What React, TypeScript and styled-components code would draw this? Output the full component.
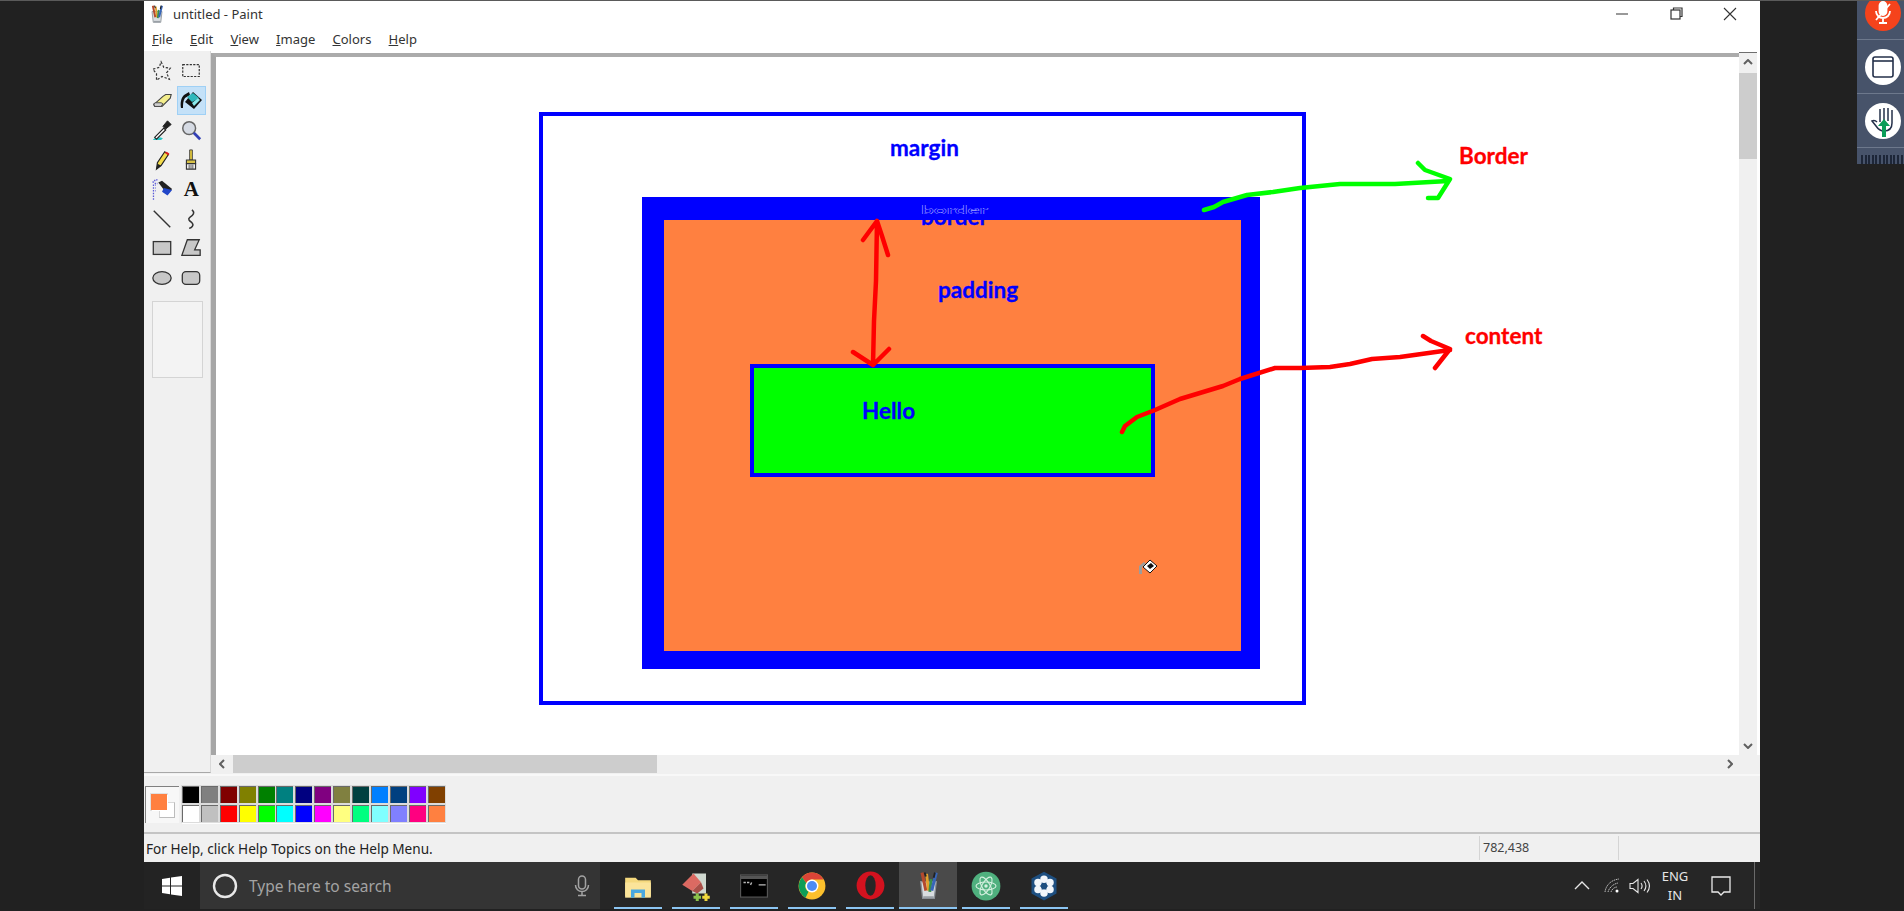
import React from "react";
import styled, { createGlobalStyle } from "styled-components";

const GlobalStyle = createGlobalStyle`
  html, body {
    margin: 0;
    padding: 0;
    background: #212121;
    overflow: hidden;
  }
  * {
    box-sizing: border-box;
  }
`;

const Screen = styled.div`
  position: relative;
  width: 1904px;
  height: 911px;
  padding: 0 144px;
  background: #212121;
  border-top: 1px solid #5a5a5a;
  display: flex;
  flex-direction: column;
  overflow: hidden;
  font-family: "Noto Sans", "Open Sans", sans-serif;
`;

const PaintWindow = styled.div`
  flex: none;
  height: 861px;
  display: flex;
  flex-direction: column;
  background: #f0f0f0;
  color: #1a1a1a;
`;

const TitleBar = styled.div`
  height: 25px;
  flex: none;
  background: #fff;
  display: flex;
  align-items: center;
  padding: 0 6px 0 3px;
  gap: 6px;
  font-size: 13px;
`;

const TitleText = styled.span`
  flex: 1;
  color: #333;
`;

const WindowButton = styled.div`
  width: 48px;
  height: 25px;
  display: flex;
  align-items: center;
  justify-content: center;
`;

const MenuBar = styled.div`
  height: 25px;
  flex: none;
  background: #fff;
  display: flex;
  align-items: center;
  gap: 17.2px;
  padding-left: 8px;
  font-size: 13px;
  color: #333;
`;

const Workspace = styled.div`
  height: 723px;
  flex: none;
  display: flex;
`;

const ToolPanel = styled.div`
  width: 67px;
  height: 722px;
  flex: none;
  padding: 5px 0 0 3.5px;
  border-bottom: 1px solid #a8a8a8;
  border-right: 1px solid #d8d8d8;
  background: #f0f0f0;
`;

const ToolGrid = styled.div`
  display: grid;
  grid-template-columns: repeat(2, 29.3px);
  grid-auto-rows: 29.6px;
`;

const ToolButton = styled.div<{ $active?: boolean }>`
  display: flex;
  align-items: center;
  justify-content: center;
  border: 1px solid ${(p) => (p.$active ? "#9fd0f5" : "transparent")};
  background: ${(p) => (p.$active ? "#c4e1f8" : "transparent")};
`;

const LetterTool = styled.span`
  font-family: "Liberation Serif", serif;
  font-weight: 700;
  font-size: 21px;
  line-height: 1;
  color: #111;
`;

const ToolOptions = styled.div`
  width: 51px;
  height: 77px;
  margin: 8px 0 0 4.5px;
  border: 1px solid #d4d4d4;
  background: #f3f3f3;
`;

const CanvasColumn = styled.div`
  flex: 1;
  min-width: 0;
  display: flex;
  flex-direction: column;
`;

const CanvasRow = styled.div`
  height: 704px;
  flex: none;
  display: flex;
  padding-right: 3px;
  background: #fff;
`;

const Viewport = styled.div`
  flex: 1;
  position: relative;
  margin-top: 2px;
  background: #fff;
  border-top: 4px solid #ababab;
  border-left: 5px solid #a6a6a6;
  overflow: hidden;
`;

const VerticalScroll = styled.div`
  width: 18px;
  flex: none;
  margin-top: 1px;
  display: flex;
  flex-direction: column;
  background: #f0f0f0;
  border-top: 1px solid #6e6e6e;
`;

const ArrowCell = styled.div`
  width: 18px;
  height: 18px;
  flex: none;
  display: flex;
  align-items: center;
  justify-content: center;
`;

const VerticalThumb = styled.div`
  height: 86px;
  flex: none;
  margin-top: 2px;
  background: #cdcdcd;
`;

const Filler = styled.div`
  flex: 1;
`;

const HorizontalScroll = styled.div`
  height: 18px;
  flex: none;
  display: flex;
  background: #f0f0f0;
  margin: 0 3px 0 2px;
`;

const HorizontalThumb = styled.div`
  width: 424px;
  flex: none;
  margin-left: 2px;
  background: #cdcdcd;
`;

const PaletteBar = styled.div`
  height: 60px;
  flex: none;
  display: flex;
  gap: 3px;
  padding: 12px 0 0 1px;
  background: #f0f0f0;
  border-bottom: 2px solid #c4c4c4;
  box-shadow: inset 0 2px 0 #f8f8f8;
`;

const ColorSelector = styled.div`
  position: relative;
  width: 34px;
  height: 37px;
  background: #f7f7f7;
  border-top: 1px solid #808080;
  border-left: 1px solid #808080;
`;

const BackColor = styled.div`
  position: absolute;
  left: 13px;
  top: 15px;
  width: 16px;
  height: 16px;
  background: #fff;
  border: 1px solid #bcbcbc;
  border-top-color: #d8d8d8;
  border-left-color: #d8d8d8;
`;

const ForeColor = styled.div<{ $color: string }>`
  position: absolute;
  left: 5px;
  top: 7px;
  width: 16px;
  height: 16px;
  background: ${(p) => p.$color};
  box-shadow: 1px 1px 0 #fff, 0 0 0 1px #e0e0e0;
`;

const SwatchGrid = styled.div`
  display: grid;
  grid-template-columns: repeat(14, 18.9px);
  grid-auto-rows: 18.9px;
  align-self: flex-start;
  background: #fdfdfd;
`;

const Swatch = styled.div<{ $color: string }>`
  width: 17px;
  height: 17px;
  background: ${(p) => p.$color};
  border-top: 1px solid #6a6a6a;
  border-left: 1px solid #6a6a6a;
  outline: 1px solid #dcdcdc;
`;

const StatusBar = styled.div`
  flex: 1;
  display: flex;
  align-items: center;
  font-size: 13.6px;
  color: #222;
  background: #f0f0f0;
`;

const StatusHelp = styled.div`
  width: 1335px;
  padding-left: 2px;
`;

const StatusCell = styled.div<{ $width: number }>`
  width: ${(p) => p.$width}px;
  height: 24px;
  line-height: 24px;
  padding-left: 3px;
  border-left: 1px solid #d4d4d4;
  font-size: 12.5px;
  color: #444;
`;

/* the painted picture */
const OuterBox = styled.div`
  position: absolute;
  left: 323px;
  top: 55px;
  width: 767px;
  height: 593px;
  border: 4px solid #0000ff;
  background: #fff;
`;

const BorderBox = styled.div`
  width: 618px;
  height: 472px;
  margin: 81px 0 0 99px;
  border-style: solid;
  border-color: #0000ff;
  border-width: 23px 19px 18px 22px;
  background: #ff8040;
`;

const ContentBox = styled.div`
  width: 405px;
  height: 113px;
  margin: 144px 0 0 86px;
  border: 4.5px solid #0000ff;
  background: #00ff00;
`;

const PaintLabel = styled.span<{ $x: number; $y: number; $color?: string }>`
  position: absolute;
  left: ${(p) => p.$x - 216}px;
  top: ${(p) => p.$y - 1 - 57}px;
  font-family: "Lato", "Open Sans", sans-serif;
  font-weight: 700;
  font-size: 22.5px;
  line-height: 26px;
  color: ${(p) => p.$color || "#0000ff"};
  -webkit-text-stroke: 0.3px currentColor;
`;

/* the word was typed twice in the picture: a squashed pale copy sits in the blue band */
const SmearedLabel = styled(PaintLabel)`
  &::before {
    content: "border";
    position: absolute;
    left: 0;
    top: -7px;
    color: transparent;
    -webkit-text-stroke: 0.4px #e8ecff;
    transform: scaleY(0.5);
  }
`;

const Strokes = styled.svg`
  position: absolute;
  left: -216px;
  top: -57px;
  width: 1904px;
  height: 911px;
  pointer-events: none;
`;

const PaintCursor = styled.svg`
  position: absolute;
  left: ${1138 - 216}px;
  top: ${558 - 57}px;
`;

/* taskbar */
const Taskbar = styled.div`
  height: 47px;
  flex: none;
  display: flex;
  background: #262626;
  color: #fff;
`;

const StartButton = styled.div`
  width: 56px;
  flex: none;
  display: flex;
  align-items: center;
  justify-content: center;
  background: #232323;
`;

const SearchBox = styled.div`
  width: 400px;
  flex: none;
  display: flex;
  align-items: center;
  padding: 0 10px 0 12px;
  gap: 11px;
  background: #343434;
  color: #a3a3a3;
  font-size: 15.5px;
`;

const SearchText = styled.span`
  flex: 1;
`;

const Pins = styled.div`
  display: flex;
  padding-left: 9px;
`;

const Pin = styled.div<{ $active?: boolean }>`
  position: relative;
  width: 58px;
  height: 47px;
  display: flex;
  align-items: center;
  justify-content: center;
  background: ${(p) => (p.$active ? "#4a4a4a" : "transparent")};

  &::after {
    content: "";
    position: absolute;
    left: ${(p) => (p.$active ? 0 : "5px")};
    right: ${(p) => (p.$active ? 0 : "5px")};
    bottom: 0;
    height: 2px;
    background: #8cc5f2;
  }
`;

const Tray = styled.div`
  flex: 1;
  display: flex;
  align-items: center;
  justify-content: flex-end;
  padding-right: 5px;
`;

const TrayIcon = styled.div<{ $width: number }>`
  width: ${(p) => p.$width}px;
  display: flex;
  justify-content: center;
`;

const Language = styled.div`
  width: 34px;
  margin-left: 7px;
  text-align: center;
  font-size: 13px;
  line-height: 19px;
  color: #e6e6e6;
`;

const ShowDesktop = styled.div`
  width: 1px;
  height: 47px;
  margin-left: 4px;
  background: #6a6a6a;
`;

/* meeting controls, floating over the screen share */
const MeetingRail = styled.div`
  position: absolute;
  right: 0;
  top: 0;
  width: 47px;
  height: 163px;
  background: #47536a;
  display: flex;
  flex-direction: column;
  align-items: center;
`;

const RailSlot = styled.div<{ $height: number; $cut?: boolean }>`
  width: 100%;
  height: ${(p) => p.$height}px;
  flex: none;
  display: flex;
  align-items: ${(p) => (p.$cut ? "flex-end" : "center")};
  justify-content: center;
  padding-bottom: ${(p) => (p.$cut ? "8px" : 0)};
  padding-left: 5px;
  border-bottom: 1px solid #6d788c;
  overflow: hidden;
`;

const RailCircle = styled.div<{ $color: string }>`
  width: 36px;
  height: 36px;
  flex: none;
  border-radius: 50%;
  display: flex;
  align-items: center;
  justify-content: center;
  background: ${(p) => p.$color};
`;

const Grille = styled.div`
  width: 42px;
  height: 15px;
  margin: 7px 0 0 3px;
  background: repeating-linear-gradient(90deg, #1d2638 0 2px, #47536a 2px 3.6px);
`;

const swatches = [
  "#000000", "#808080", "#800000", "#808000", "#008000", "#008080", "#000080",
  "#800080", "#808040", "#004040", "#0080ff", "#004080", "#8000ff", "#804000",
  "#ffffff", "#c0c0c0", "#ff0000", "#ffff00", "#00ff00", "#00ffff", "#0000ff",
  "#ff00ff", "#ffff80", "#00ff80", "#80ffff", "#8080ff", "#ff0080", "#ff8040",
];

const Icon: React.FC<{ size?: number; children: React.ReactNode }> = ({ size = 22, children }) => (
  <svg width={size} height={size} viewBox="0 0 24 24" fill="none">
    {children}
  </svg>
);

const PaintCup: React.FC<{ size: number }> = ({ size }) => (
  <Icon size={size}>
    <path d="M6 9h12l-1.5 13h-9z" fill="#d8dde0" stroke="#8a9096" strokeWidth="1" />
    <path d="M7 2l3 14" stroke="#b5492c" strokeWidth="2.4" />
    <path d="M10.5 3l1.5 13" stroke="#e2a12c" strokeWidth="2.2" />
    <path d="M14 7l-1 10" stroke="#3a8f4a" strokeWidth="2.2" />
    <path d="M18 2l-3.5 14" stroke="#3866b8" strokeWidth="2.4" />
    <path d="M9 2l1 3M17 2l-1 4" stroke="#222" strokeWidth="1.4" />
    <path d="M8 21h8" stroke="#9aa0a6" strokeWidth="1.4" />
  </Icon>
);

const tools: { name: string; icon: React.ReactNode; active?: boolean }[] = [
  {
    name: "free select",
    icon: (
      <Icon>
        <path d="M11 2l3 6 7 1-4 5 3 7-8-3-6 4 0-7-4-5 7-2z" stroke="#333" strokeWidth="1.3" strokeDasharray="2.6 1.8" />
      </Icon>
    ),
  },
  {
    name: "select",
    icon: (
      <Icon>
        <rect x="3" y="5" width="18" height="13" stroke="#333" strokeWidth="1.3" strokeDasharray="2.4 1.4" />
      </Icon>
    ),
  },
  {
    name: "eraser",
    icon: (
      <Icon>
        <path d="M3 17l10-9 3-2h6l-1 4-9 9H4z" fill="#f4ee8c" stroke="#444" strokeWidth="1.2" />
        <path d="M3 16l2-1h6l2 1-2 3H4z" fill="#d0d0d0" stroke="#444" strokeWidth="1" />
      </Icon>
    ),
  },
  {
    name: "fill",
    active: true,
    icon: (
      <Icon size={24}>
        <path d="M2 20c-1-5 0-10 3-13l5-3 1 3-5 3c-2 3-2 6-2 10z" fill="#111" />
        <path d="M6 14l8-10 9 8-8 9z" fill="#111" />
        <path d="M8 9l6-4 6 5-7 4z" fill="#30b8bc" />
        <path d="M13 15l6-5 2 2-6 6z" fill="#8ae8ea" />
      </Icon>
    ),
  },
  {
    name: "pick color",
    icon: (
      <Icon>
        <path d="M2 23c2-3 7-4 11-2l-2 2z" fill="#2cc6c6" />
        <path d="M4 20l10-10 2 2L6 22z" fill="#fff" stroke="#222" strokeWidth="1.3" />
        <path d="M13 8l5-6 4 4-6 5z" fill="#222" stroke="#222" />
      </Icon>
    ),
  },
  {
    name: "magnifier",
    icon: (
      <Icon>
        <circle cx="10" cy="10" r="7" fill="#d6dbe4" stroke="#666" strokeWidth="1.6" />
        <path d="M15 15l7 7" stroke="#3340b5" strokeWidth="3" />
      </Icon>
    ),
  },
  {
    name: "pencil",
    icon: (
      <Icon>
        <path d="M6 22l1-7 8-12 4 3-8 12z" fill="#f4dc4c" stroke="#222" strokeWidth="1.3" />
        <path d="M6 22l1-6 4 2z" fill="#222" />
        <path d="M15 4l4 3 1-2-3-2z" fill="#d22" />
      </Icon>
    ),
  },
  {
    name: "brush",
    icon: (
      <Icon>
        <path d="M10.5 1h3v11h-3z" fill="#e2c83c" stroke="#444" strokeWidth="1" />
        <path d="M7 12h10v4H7z" fill="#d8c248" stroke="#333" strokeWidth="1.2" />
        <path d="M7 16h10v6H7z" fill="#eee" stroke="#333" strokeWidth="1.2" />
        <path d="M10 17v5M12 17v5M14 17v5" stroke="#555" />
      </Icon>
    ),
  },
  {
    name: "airbrush",
    icon: (
      <Icon>
        <path d="M2 5c1-2 3-3 5-3M2 8h3M2 11h3M2 14h3M2 17h2M2 20h2M2 23h2M4 6h3" stroke="#5a5ad8" strokeWidth="1.6" strokeDasharray="1.4 1" />
        <path d="M8 5l4-2 11 9-5 6z" fill="#222" />
        <path d="M14 11l9 2-5 6-6-4z" fill="#2146c8" />
      </Icon>
    ),
  },
  { name: "text", icon: <LetterTool>A</LetterTool> },
  {
    name: "line",
    icon: (
      <Icon>
        <path d="M3 3l18 18" stroke="#333" strokeWidth="1.6" />
      </Icon>
    ),
  },
  {
    name: "curve",
    icon: (
      <Icon>
        <path d="M13 2c4 3 1 6-2 8-3 2-1 4 2 6 3 3-1 6-3 6" stroke="#333" strokeWidth="1.6" />
      </Icon>
    ),
  },
  {
    name: "rectangle",
    icon: (
      <Icon>
        <rect x="2.5" y="5" width="19" height="14" fill="#c8c8c8" stroke="#333" strokeWidth="1.4" />
      </Icon>
    ),
  },
  {
    name: "polygon",
    icon: (
      <Icon>
        <path d="M8 3h13l-5 11h6v6H2z" fill="#c8c8c8" stroke="#333" strokeWidth="1.4" />
      </Icon>
    ),
  },
  {
    name: "ellipse",
    icon: (
      <Icon>
        <ellipse cx="12" cy="12" rx="10" ry="7" fill="#c8c8c8" stroke="#333" strokeWidth="1.4" />
      </Icon>
    ),
  },
  {
    name: "rounded rectangle",
    icon: (
      <Icon>
        <rect x="2.5" y="5" width="19" height="14" rx="4" fill="#c8c8c8" stroke="#333" strokeWidth="1.4" />
      </Icon>
    ),
  },
];

const pins: { name: string; icon: React.ReactNode; active?: boolean }[] = [
  {
    name: "explorer",
    icon: (
      <Icon size={28}>
        <path d="M1 5h9l2 2h11v14H1z" fill="#f5d97e" />
        <path d="M1 9h22v13H1z" fill="#fbe49a" />
        <path d="M6 22v-7h12v7h-3v-4H9v4z" fill="#4aa8e0" />
      </Icon>
    ),
  },
  {
    name: "notepad",
    icon: (
      <Icon size={30}>
        <path d="M9 2h11v16H9z" fill="#cfd8cf" />
        <path d="M1 11L10 2l6 7-7 7z" fill="#dc6a62" />
        <path d="M9 16l7-7 2 5-5 4z" fill="#a94f48" />
        <path d="M10 21h6M13 18v6" stroke="#8bc34a" strokeWidth="2.4" />
        <path d="M17 21h6M20 18v6" stroke="#f0d83c" strokeWidth="2.4" />
      </Icon>
    ),
  },
  {
    name: "terminal",
    icon: (
      <Icon size={28}>
        <rect x="0.5" y="2.5" width="23" height="19" fill="#000" stroke="#555" />
        <path d="M0.5 3h23v3h-23z" fill="#555" />
        <path d="M3 9h2M6 9h2M10 9l-1 2M16 11h6" stroke="#bbb" strokeWidth="1.2" />
      </Icon>
    ),
  },
  {
    name: "chrome",
    icon: (
      <Icon size={28}>
        <circle cx="12" cy="12" r="11.5" fill="#fbc02d" />
        <path d="M12 .5A11.5 11.5 0 0 1 22 6.5H12a5.5 5.5 0 0 0-5 3L3.5 4.500A11.500 11.500 0 0 1 12 .5z" fill="#db4437" />
        <path d="M3.500 4.500L7 9.500a5.500 5.500 0 0 0 2 7.500l-2.500 5A11.500 11.500 0 0 1 3.500 4.500z" fill="#0f9d58" />
        <circle cx="12" cy="12" r="5.500" fill="#fff" />
        <circle cx="12" cy="12" r="4.300" fill="#4c8bf5" />
      </Icon>
    ),
  },
  {
    name: "opera",
    icon: (
      <Icon size={29}>
        <circle cx="12" cy="12" r="11.500" fill="#d3121f" />
        <ellipse cx="12" cy="12" rx="4.300" ry="8.500" fill="#262626" />
      </Icon>
    ),
  },
  { name: "paint", active: true, icon: <PaintCup size={31} /> },
  {
    name: "atom",
    icon: (
      <Icon size={30}>
        <circle cx="12" cy="12" r="11.500" fill="#4fb07e" />
        <g stroke="#d5f0e0" strokeWidth="0.9" fill="none">
          <ellipse cx="12" cy="12" rx="8" ry="3.200" />
          <ellipse cx="12" cy="12" rx="8" ry="3.200" transform="rotate(60 12 12)" />
          <ellipse cx="12" cy="12" rx="8" ry="3.200" transform="rotate(120 12 12)" />
        </g>
        <circle cx="12" cy="12" r="1.400" fill="#d5f0e0" />
      </Icon>
    ),
  },
  {
    name: "snow",
    icon: (
      <Icon size={30}>
        <path d="M12 .5l10 5.500v12l-10 5.500-10-5.500V6z" fill="#1e4f80" />
        <g fill="#f2f6fa">
          <circle cx="12" cy="6.500" r="3" />
          <circle cx="12" cy="17.500" r="3" />
          <circle cx="7.200" cy="9.200" r="3" />
          <circle cx="16.800" cy="9.200" r="3" />
          <circle cx="7.200" cy="14.800" r="3" />
          <circle cx="16.800" cy="14.800" r="3" />
        </g>
        <circle cx="12" cy="12" r="2.500" fill="#1e4f80" />
      </Icon>
    ),
  },
];

const App: React.FC = () => (
  <>
    <GlobalStyle />
    <Screen>
      <PaintWindow>
        <TitleBar>
          <PaintCup size={20} />
          <TitleText>untitled - Paint</TitleText>
          <WindowButton>
            <svg width="12" height="2"><path d="M0 1h12" stroke="#555" strokeWidth="1.2" /></svg>
          </WindowButton>
          <WindowButton>
            <svg width="13" height="13" fill="none" stroke="#333" strokeWidth="1.2">
              <rect x="1" y="3" width="9" height="9" />
              <path d="M3.500 3V1h8.500v8.500H10" />
            </svg>
          </WindowButton>
          <WindowButton>
            <svg width="14" height="14" stroke="#333" strokeWidth="1.1"><path d="M1 1l12 12M13 1L1 13" /></svg>
          </WindowButton>
        </TitleBar>
        <MenuBar>
          <span><u>F</u>ile</span>
          <span><u>E</u>dit</span>
          <span><u>V</u>iew</span>
          <span><u>I</u>mage</span>
          <span><u>C</u>olors</span>
          <span><u>H</u>elp</span>
        </MenuBar>
        <Workspace>
          <ToolPanel>
            <ToolGrid>
              {tools.map((tool) => (
                <ToolButton key={tool.name} $active={tool.active}>
                  {tool.icon}
                </ToolButton>
              ))}
            </ToolGrid>
            <ToolOptions />
          </ToolPanel>
          <CanvasColumn>
            <CanvasRow>
              <Viewport>
                <OuterBox>
                  <BorderBox>
                    <ContentBox />
                  </BorderBox>
                </OuterBox>
                <PaintLabel $x={890} $y={136}>margin</PaintLabel>
                <SmearedLabel $x={921} $y={205}>border</SmearedLabel>
                <PaintLabel $x={938} $y={278}>padding</PaintLabel>
                <PaintLabel $x={862} $y={399}>Hello</PaintLabel>
                <PaintLabel $x={1459} $y={144} $color="#ff0000">Border</PaintLabel>
                <PaintLabel $x={1465} $y={324} $color="#ff0000">content</PaintLabel>
                <Strokes viewBox="0 0 1904 911" fill="none" strokeLinecap="round" strokeLinejoin="round" strokeWidth="4.500">
                  <path stroke="#00ff00" d="M1204 210l10-3 9-5 24-7 26-3 27-4 40-4h55l53-3M1418 163l7 7 25 9-12 19-10 0" />
                  <path stroke="#ff0000" d="M1122 432l3-6 12-9 18-7 25-11 43-13 17-7 35-11 25 0 30-1 20-3 22-5 28-2 50-7M1423 336l8 5 19 8-15 19" />
                  <path stroke="#ff0000" d="M877 221l-1 60-2 40-1 44M877 221l-14 19M877 221l5 15 6 19M873 365l-20-13M873 365l16-16" />
                </Strokes>
                <PaintCursor width="20" height="18" viewBox="0 0 20 18">
                  <path d="M1 16V8l5-4 2 2-4 3v7z" fill="#9c9c9c" />
                  <path d="M5 9l7-7 7 6-7 7z" fill="#fff" stroke="#111" strokeWidth="1" />
                  <path d="M9 8l4-3 3 3-4 3z" fill="#111" />
                </PaintCursor>
              </Viewport>
              <VerticalScroll>
                <ArrowCell>
                  <svg width="10" height="6" fill="none" stroke="#606060" strokeWidth="2"><path d="M1 5l4-4 4 4" /></svg>
                </ArrowCell>
                <VerticalThumb />
                <Filler />
                <ArrowCell>
                  <svg width="10" height="6" fill="none" stroke="#606060" strokeWidth="2"><path d="M1 1l4 4 4-4" /></svg>
                </ArrowCell>
              </VerticalScroll>
            </CanvasRow>
            <HorizontalScroll>
              <ArrowCell>
                <svg width="6" height="10" fill="none" stroke="#606060" strokeWidth="2"><path d="M5 1L1 5l4 4" /></svg>
              </ArrowCell>
              <HorizontalThumb />
              <Filler />
              <ArrowCell>
                <svg width="6" height="10" fill="none" stroke="#606060" strokeWidth="2"><path d="M1 1l4 4-4 4" /></svg>
              </ArrowCell>
              <ArrowCell />
            </HorizontalScroll>
          </CanvasColumn>
        </Workspace>
        <PaletteBar>
          <ColorSelector>
            <BackColor />
            <ForeColor $color="#ff8040" />
          </ColorSelector>
          <SwatchGrid>
            {swatches.map((color, i) => (
              <Swatch key={i} $color={color} />
            ))}
          </SwatchGrid>
        </PaletteBar>
        <StatusBar>
          <StatusHelp>For Help, click Help Topics on the Help Menu.</StatusHelp>
          <StatusCell $width={139}>782,438</StatusCell>
          <StatusCell $width={140} />
        </StatusBar>
      </PaintWindow>
      <Taskbar>
        <StartButton>
          <svg width="20" height="20" viewBox="0 0 20 20" fill="#fff">
            <path d="M0 3l8-1.200V9.500H0zM9 1.600L20 0v9.500H9zM0 10.500h8v7.700L0 17zM9 10.500h11V20L9 18.400z" />
          </svg>
        </StartButton>
        <SearchBox>
          <svg width="26" height="26" fill="none"><circle cx="13" cy="13" r="11" stroke="#e8e8e8" strokeWidth="2.400" /></svg>
          <SearchText>Type here to search</SearchText>
          <svg width="16" height="22" viewBox="0 0 16 22" fill="none" stroke="#a3a3a3" strokeWidth="1.500">
            <rect x="4.500" y="1" width="7" height="13" rx="3.500" />
            <path d="M1.500 10c0 4 3 6.500 6.500 6.500s6.500-2.500 6.500-6.500M8 16.500V20M4 20.500h8" />
          </svg>
        </SearchBox>
        <Pins>
          {pins.map((pin) => (
            <Pin key={pin.name} $active={pin.active}>
              {pin.icon}
            </Pin>
          ))}
        </Pins>
        <Tray>
          <TrayIcon $width={30}>
            <svg width="16" height="9" fill="none" stroke="#e6e6e6" strokeWidth="1.400"><path d="M1 8l7-7 7 7" /></svg>
          </TrayIcon>
          <TrayIcon $width={30}>
            <svg width="17" height="15" viewBox="0 0 17 15" fill="none" stroke="#bdbdbd" strokeWidth="1">
              <path d="M1 14C2 7 7 2 15 1M4 14c1-4 5-8 10-9M7 14c.5-2 3-5 6-5" strokeDasharray="1.500 .7" />
              <circle cx="13" cy="13" r="1.500" fill="#fff" stroke="none" />
            </svg>
          </TrayIcon>
          <TrayIcon $width={24}>
            <svg width="21" height="16" viewBox="0 0 21 16" fill="none" stroke="#e6e6e6" strokeWidth="1.100">
              <path d="M1 5.500h3L9 1.500v13l-5-4H1zM12 5c1.300 1.800 1.300 4.200 0 6M15 3c2.300 3 2.300 7 0 10M18 1.500c3 4 3 9 0 13" />
            </svg>
          </TrayIcon>
          <Language>
            ENG
            <br />
            IN
          </Language>
          <TrayIcon $width={58}>
            <svg width="20" height="20" viewBox="0 0 20 20" fill="none" stroke="#eaeaea" strokeWidth="1.300">
              <path d="M1 1h18v15h-6l-3 3-3-3H1z" />
            </svg>
          </TrayIcon>
          <ShowDesktop />
        </Tray>
      </Taskbar>
      <MeetingRail>
        <RailSlot $height={39} $cut>
          <RailCircle $color="#f5431c">
            <svg width="20" height="24" viewBox="0 0 20 24" fill="none" stroke="#fff" strokeWidth="1.800">
              <rect x="6.500" y="1" width="7" height="13" rx="3.500" fill="#fff" />
              <path d="M3 10c0 4 3 7 7 7s7-3 7-7M10 17v4M6 22h8M3 19L17 3" />
            </svg>
          </RailCircle>
        </RailSlot>
        <RailSlot $height={54}>
          <RailCircle $color="#ffffff">
            <svg width="22" height="22" viewBox="0 0 22 22" fill="none" stroke="#24304a" strokeWidth="1.600">
              <rect x="1" y="1" width="20" height="20" rx="2" />
              <path d="M1 5h20" />
            </svg>
          </RailCircle>
        </RailSlot>
        <RailSlot $height={54}>
          <RailCircle $color="#ffffff">
            <svg width="26" height="32" viewBox="0 0 26 32" fill="none">
              <path d="M10 4v13M14 3v13M18 3v13M22 5v13c0 5-3 8-8 8-4 0-6-2-8-5l-4-5c2-1 3-1 5 1" stroke="#24304a" strokeWidth="1.500" />
              <path d="M12 32V21H8l6-7 6 7h-4v11z" fill="#0a9d58" />
            </svg>
          </RailCircle>
        </RailSlot>
        <Grille />
      </MeetingRail>
    </Screen>
  </>
);

export default App;
